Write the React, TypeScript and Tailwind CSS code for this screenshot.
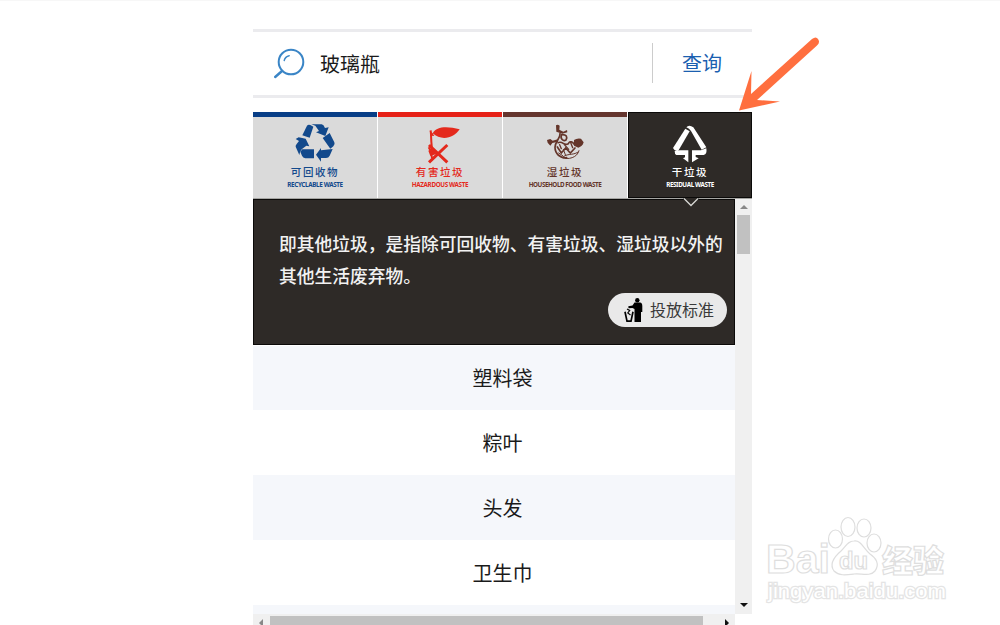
import { useState } from "react";
import type { ReactNode } from "react";
import clsx from "clsx";

type Tab = {
  name: string;
  en: string;
  bar: string;
  text: string;
  tracking: string;
  icon: ReactNode;
};

const RecyclableIcon = () => (
  <svg viewBox="129 50 132 126" className="h-[42px] w-11" fill="#12498c">
    <path d="M157 90 L171 61 Q174 57 181 59 L190 64 L179 97 Z" />
    <path d="M184 57 H215 Q221 58 225 68 L236 66 L226 92 L198 81 L207 77 L196 61 Z" />
    <path d="M218 98 L239 83 L253 111 Q256 117 250 123 L241 130 Z" />
    <path d="M248 131 L239 151 Q236 158 228 158 H213 V169 L198 148 L213 128 V135 Z" />
    <path d="M157 132 H192 V159 H166 Q159 158 156 151 L151 139 Z" />
    <path d="M146 96 L167 100 L178 123 L169 121 L157 130 Q151 134 148 149 L137 124 Q136 121 140 116 L147 107 L137 101 Z" />
  </svg>
);

const HazardousIcon = () => (
  <svg viewBox="129 50 132 126" className="h-[42px] w-11" fill="#e4291c">
    <path d="M173 84 C184 62 218 62 254 72 C238 98 199 108 173 84 Z" />
    <path
      d="M167 75 C169 94 168 105 170 120 C172 135 166 145 171 158 M161 126 L169 140"
      fill="none"
      stroke="#e4291c"
      strokeWidth="6"
    />
    <path d="M162 119 L217 171 M217 119 L162 171" fill="none" stroke="#e4291c" strokeWidth="9" />
    <path d="M164 76 L173 84 L178 92 L168 91 Z" />
    <path d="M160 136 L176 128 L184 146 L166 152 Z" />
  </svg>
);

const FoodIcon = () => (
  <svg viewBox="129 50 132 126" className="h-[42px] w-11" fill="#64352a">
    <path d="M168 60 Q173 56 179 61 L178 73 L190 79 L201 74 L202 81 L187 85 L169 79 Z" />
    <path d="M222 104 Q230 98 243 100 L251 111 Q247 124 235 127 L222 121 Z" />
    <path d="M141 104 L151 101 L158 106 L173 102 L174 109 L157 113 L151 121 L143 112 Z" />
    <g fill="none" stroke="#64352a" strokeWidth="5" strokeLinecap="round">
      <path d="M180 85 C182 98 165 108 165 126 C165 146 181 159 200 157" />
      <path d="M187 88 C199 88 203 94 198 104 C190 109 179 100 185 88" />
      <path d="M174 112 C190 105 190 124 205 115 C210 105 218 110 222 116" />
      <path d="M172 125 L184 143 L197 128 L211 143 L225 128" />
      <path d="M188 158 C204 163 232 158 237 136" strokeWidth="3" />
      <path d="M188 156 C201 143 217 151 233 141 M196 148 L190 132 M176 143 L188 151" strokeWidth="3" />
      <path d="M193 118 L206 132 M211 109 L218 127 M179 118 L184 130" strokeWidth="4" />
    </g>
  </svg>
);

const ResidualIcon = () => (
  <svg viewBox="129 50 132 126" className="h-[42px] w-11" fill="white">
    <path d="M144 128 L181 70 L194 78 L160 136 Q149 139 144 128 Z" />
    <path d="M184 66 Q192 57 205 66 L244 126 L230 133 L198 77 Q193 69 184 66 Z" />
    <path d="M149 137 L164 135 H190 V171 L174 159 L180 156 V149 H154 Q149 147 149 137 Z" />
    <path d="M201 135 H228 L244 129 Q247 147 236 149 H212 V155 L221 159 L201 171 Z" />
  </svg>
);

const tabs: Tab[] = [
  {
    name: "可回收物",
    en: "RECYCLABLE WASTE",
    bar: "bg-[#083e86]",
    text: "text-[#12498c]",
    tracking: "tracking-[-0.35px]",
    icon: <RecyclableIcon />,
  },
  {
    name: "有害垃圾",
    en: "HAZARDOUS WASTE",
    bar: "bg-[#e62117]",
    text: "text-[#e4291c]",
    tracking: "tracking-[-0.35px]",
    icon: <HazardousIcon />,
  },
  {
    name: "湿垃圾",
    en: "HOUSEHOLD FOOD WASTE",
    bar: "bg-[#64352e]",
    text: "text-[#64352a]",
    tracking: "tracking-[-0.45px]",
    icon: <FoodIcon />,
  },
  {
    name: "干垃圾",
    en: "RESIDUAL WASTE",
    bar: "bg-[#2e2a27]",
    text: "text-white",
    tracking: "tracking-[-0.4px]",
    icon: <ResidualIcon />,
  },
];

const items = ["塑料袋", "粽叶", "头发", "卫生巾", ""];

const SearchBar = () => {
  const [keyword, setKeyword] = useState("玻璃瓶");

  return (
    <div className="flex h-[69px] shrink-0 items-center border-y-3 border-[#ebebee]">
      <svg viewBox="0 0 32 32" className="ml-[21px] size-8" fill="none" stroke="#3a85c6" strokeLinecap="round">
        <circle cx="17" cy="14" r="12.3" strokeWidth="2" />
        <path d="M10.2 12.5 Q11.2 8.5 15.2 7.7" strokeWidth="1.4" />
        <path d="M8 23 L1.2 29" strokeWidth="2.4" />
      </svg>
      <input
        value={keyword}
        onChange={(e) => setKeyword(e.target.value)}
        className="ml-[14px] w-[332px] text-xl text-[#1a1a1a] outline-none"
      />
      <button className="mb-[2px] h-10 w-[100px] cursor-pointer border-l border-[#ccc] pr-px text-xl text-[#1b5fb0]">
        查询
      </button>
    </div>
  );
};

export default function App() {
  const [active, setActive] = useState(3);

  return (
    <main className="relative h-[625px] w-[1000px] overflow-hidden border-t border-[#f7f7f7] bg-white font-['Noto_Sans_CJK_SC',sans-serif]">
      <div className="ml-[253px] flex h-full w-[499px] flex-col pt-7">
        <SearchBar />

        <div className="mt-[14px] flex h-[87px] shrink-0 gap-px border-b border-[#a5a5a2]">
          {tabs.map((tab, i) => (
            <button
              key={tab.en}
              onClick={() => setActive(i)}
              className={clsx(
                "relative flex w-[124px] shrink-0 cursor-pointer flex-col items-center",
                tab.text,
                i === active ? "border border-[#0b0a09] bg-[#2e2a27]" : "bg-[#dadada]"
              )}
            >
              <span className={clsx("w-full shrink-0", tab.bar, i === active ? "h-1" : "h-[5px]")} />
              <span className="mt-[5px] h-[42px] shrink-0">{tab.icon}</span>
              <span className="text-[10.5px] leading-[16px] font-medium tracking-[1.6px]">
                {tab.name}
              </span>
              <span className={clsx("mt-px font-['Noto_Sans'] text-[6.3px] leading-[7px] font-bold whitespace-nowrap", tab.tracking)}>
                {tab.en}
              </span>
              {i === active && (
                <svg viewBox="0 0 16 9" className="absolute -bottom-[10px] left-[54px] z-10 h-[9px] w-4">
                  <path d="M0 0 L8 7.5 L16 0 Z" fill="#2e2a27" />
                  <path d="M1 0.5 L8 7.5 L15 0.5" fill="none" stroke="#d8d8d5" strokeWidth="1.3" />
                </svg>
              )}
            </button>
          ))}
        </div>

        <div className="flex h-[415px] shrink-0">
          <div className="w-[482px] overflow-hidden">
            <section className="h-[146px] border border-[#0b0a09] bg-[#2e2a27] pt-[27px] pl-[25px]">
              <p className="text-[17.75px] leading-8 font-medium whitespace-nowrap text-[#f2f2f2]">
                即其他垃圾，是指除可回收物、有害垃圾、湿垃圾以外的
                <br />
                其他生活废弃物。
              </p>
              <button className="mt-[2px] ml-[329px] flex h-[34px] w-[119px] cursor-pointer items-center rounded-full bg-[#e9e9e9] text-base text-[#3a3a3a]">
                <svg viewBox="0 0 19 25" className="ml-4 h-[25px] w-[19px]" fill="black">
                  <circle cx="13.3" cy="2.2" r="2.2" />
                  <path d="M10.5 4.5 H16 Q18.3 4.5 18.3 8 V14 H17 V24 H10.5 V11 L8.5 10 L4.5 10.2 L4.3 8.2 L8.5 7.5 Z" />
                  <path d="M1 13.8 L3 23.2 H7 L9 13.8" fill="none" stroke="black" strokeWidth="1.7" />
                  <path d="M3 11 L5.7 12.5 L3.8 15 L6.5 17" fill="none" stroke="black" strokeWidth="1.2" />
                </svg>
                <span className="mb-0.5 ml-[7px]">投放标准</span>
              </button>
            </section>
            <ul className="pt-px">
              {items.map((item, i) => (
                <li
                  key={i}
                  className="flex h-[65px] items-center justify-center pl-[17px] text-xl text-[#1a1a1a] first:h-16 odd:bg-[#f5f7fb]"
                >
                  {item}
                </li>
              ))}
            </ul>
          </div>
          <div className="flex w-[17px] flex-col items-center justify-between bg-[#f0f0f0] pt-[6px] pb-[7px]">
            <div className="flex flex-col items-center">
              <svg viewBox="0 0 8 4" className="h-1 w-2" fill="#888">
                <path d="M0 4 L4 0 L8 4 Z" />
              </svg>
              <div className="mt-[6px] h-[39px] w-[13px] bg-[#c1c1c1]" />
            </div>
            <svg viewBox="0 0 8 4" className="h-1 w-2" fill="#111">
              <path d="M0 0 L4 4 L8 0 Z" />
            </svg>
          </div>
        </div>

        <div className="flex h-[17px] w-[499px] shrink-0 items-center bg-[#f0f0f0] pr-[17px] bg-clip-content">
          <svg viewBox="0 0 4 8" className="ml-[6px] h-2 w-1" fill="#888">
            <path d="M4 0 L0 4 L4 8 Z" />
          </svg>
          <div className="ml-[7px] h-[13px] w-[433px] bg-[#c1c1c1]" />
          <svg viewBox="0 0 4 8" className="ml-[22px] h-2 w-1" fill="#111">
            <path d="M0 0 L4 4 L0 8 Z" />
          </svg>
        </div>
      </div>

      {/* pointer to the active tab */}
      <svg viewBox="0 0 84 76" className="absolute top-[34px] left-[737px] h-[76px] w-[84px]" fill="#ff6f3f">
        <path d="M2 75.5 L14.5 36 L14 59 L75 4 Q79 1 81 4 Q83.5 7.5 80 10.5 L20 65 L43 66.5 Z" />
      </svg>

      {/* watermark */}
      <svg
        viewBox="0 0 190 92"
        className="absolute top-[512px] left-[762px] h-[92px] w-[190px]"
        fill="white"
        stroke="#dedede"
        strokeWidth="1.2"
      >
        <text x="4" y="60" fontFamily="Liberation Sans" fontWeight="700" fontSize="41" textLength="64" lengthAdjust="spacingAndGlyphs">
          Bai
        </text>
        <ellipse cx="73.5" cy="26" rx="7" ry="9" />
        <ellipse cx="86" cy="14" rx="7" ry="9.5" />
        <ellipse cx="102" cy="15" rx="7" ry="9" />
        <ellipse cx="112" cy="30" rx="7" ry="9" />
        <path d="M92 28 C99 27 101 35 108 41 C114 45 118 51 113 58 C108 64 99 60 92 61 C84 62 77 63 72 58 C67 51 72 44 79 38 C84 33 86 28 92 28 Z" />
        <text x="77" y="56" fontFamily="Liberation Sans" fontWeight="700" fontSize="24" textLength="29" lengthAdjust="spacingAndGlyphs">
          du
        </text>
        <text x="120" y="59" fontFamily="Noto Sans CJK SC" fontWeight="900" fontSize="31">
          经验
        </text>
        <text
          x="6"
          y="85"
          fontFamily="Liberation Sans"
          fontSize="20"
          textLength="178"
          lengthAdjust="spacingAndGlyphs"
          stroke="#e4e4e4"
          strokeWidth="2.4"
          paintOrder="stroke"
        >
          jingyan.baidu.com
        </text>
      </svg>
    </main>
  );
}
